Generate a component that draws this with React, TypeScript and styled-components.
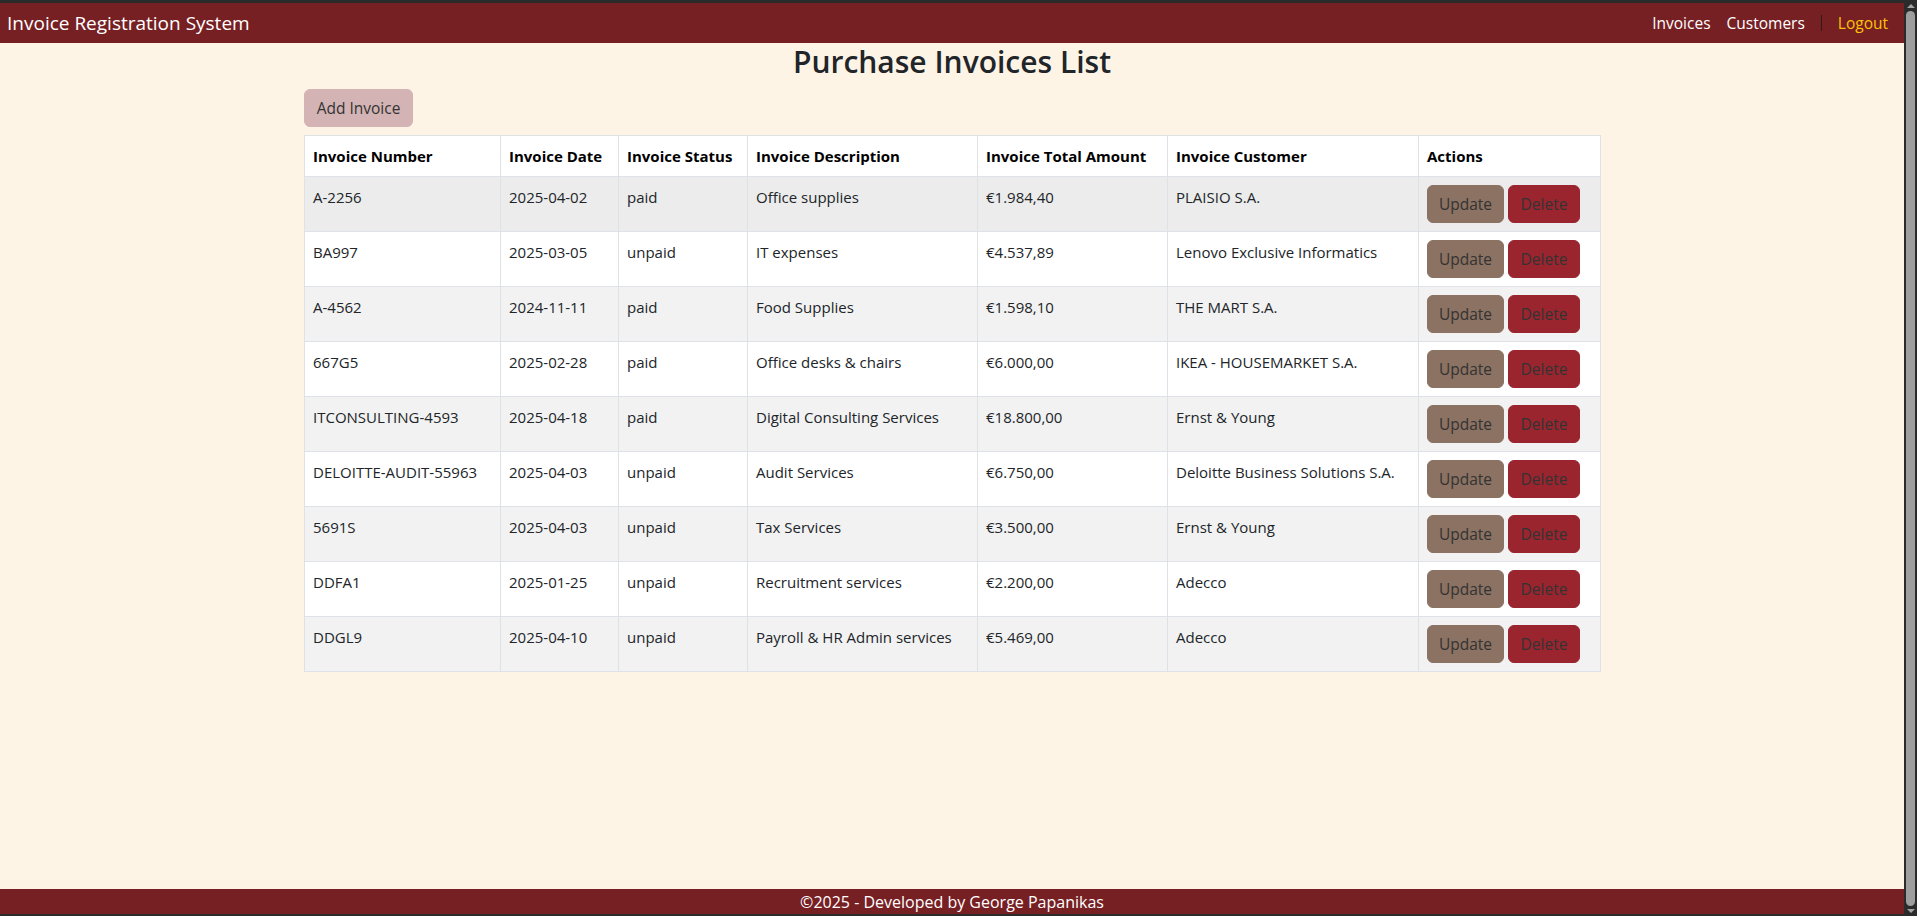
import React from "react";
import styled, { createGlobalStyle } from "styled-components";

const Global = createGlobalStyle`
  html, body { margin: 0; padding: 0; height: 100%; overflow: hidden; }
  body { font-family: "Segoe UI", "Open Sans", "Noto Sans", sans-serif; }
  * { box-sizing: border-box; }
`;

const Frame = styled.div`
  height: 100vh;
  display: flex;
  background: #2b2b2b;
`;

const Page = styled.div`
  flex: 1;
  display: flex;
  flex-direction: column;
  padding: 3px 0 2px;
`;

const Scrollbar = styled.div`
  width: 13px;
  display: flex;
  flex-direction: column;
  align-items: center;
  padding: 4px 0 3px;
  gap: 3px;
`;

const Arrow = styled.div<{ $down?: boolean }>`
  width: 0;
  height: 0;
  border-left: 4px solid transparent;
  border-right: 4px solid transparent;
  ${(p) => (p.$down ? "border-top: 4px solid #a3a3a3;" : "border-bottom: 4px solid #a3a3a3;")}
`;

const Thumb = styled.div`
  flex: 1;
  width: 9px;
  border-radius: 5px;
  background: #9e9e9e;
`;

const NavBar = styled.nav`
  height: 40px;
  background: #762024;
  display: flex;
  align-items: center;
  justify-content: space-between;
  padding: 0 16px 0 7px;
  color: #fff;
`;

const Brand = styled.div`
  font-size: 19px;
  color: #fff;
`;

const NavLinks = styled.div`
  display: flex;
  align-items: center;
`;

const NavLink = styled.a<{ $gold?: boolean }>`
  font-size: 15.5px;
  color: ${(p) => (p.$gold ? "#ffc107" : "#fff")};
  text-decoration: none;
  padding: 0 8px;
  &:last-child { padding-right: 0; }
`;

const Separator = styled.span`
  width: 1px;
  height: 16px;
  background: #2f1a1a;
  margin: 0 8px;
`;

const Main = styled.main`
  flex: 1;
  background: #fef4e6;
  display: flex;
  flex-direction: column;
  align-items: center;
`;

const Container = styled.div`
  width: 1320px;
  padding: 0 12px;
  display: flex;
  flex-direction: column;
  align-items: flex-start;
`;

const Title = styled.h2`
  margin: 0 0 8px;
  align-self: stretch;
  text-align: center;
  font-size: 30px;
  font-weight: 600;
  line-height: 38px;
  color: #212529;
`;

const Button = styled.button<{ $bg: string }>`
  font-family: inherit;
  font-size: 15.5px;
  line-height: 24px;
  border: 1px solid ${(p) => p.$bg};
  border-radius: 6px;
  background: ${(p) => p.$bg};
  color: #333;
  cursor: pointer;
  height: 38px;
  padding: 0;
`;

const AddButton = styled(Button)`
  width: 109px;
  margin-bottom: 8px;
`;

const ActionButton = styled(Button)<{ $w: number }>`
  width: ${(p) => p.$w}px;
`;

const Table = styled.table`
  width: 1296px;
  border-collapse: collapse;
  table-layout: fixed;
  font-size: 15px;
  color: #212529;
`;

const Th = styled.th<{ $w: number }>`
  width: ${(p) => p.$w}px;
  text-align: left;
  font-weight: 700;
  color: #000;
  padding: 8px;
  line-height: 24px;
  background: #fff;
  border: 1px solid #dee2e6;
`;

const Row = styled.tr<{ $shade: string }>`
  background: ${(p) => p.$shade};
`;

const Td = styled.td`
  padding: 8px;
  line-height: 24px;
  vertical-align: top;
  border: 1px solid #dee2e6;
`;

const Actions = styled.div`
  display: flex;
  gap: 4px;
`;

const Footer = styled.footer`
  height: 25px;
  background: #762024;
  color: #fff;
  font-size: 16px;
  display: flex;
  align-items: center;
  justify-content: center;
`;

const columns: [string, number][] = [
  ["Invoice Number", 196],
  ["Invoice Date", 118],
  ["Invoice Status", 129],
  ["Invoice Description", 230],
  ["Invoice Total Amount", 190],
  ["Invoice Customer", 251],
  ["Actions", 182],
];

const rows = [
  ["A-2256", "2025-04-02", "paid", "Office supplies", "€1.984,40", "PLAISIO S.A."],
  ["BA997", "2025-03-05", "unpaid", "IT expenses", "€4.537,89", "Lenovo Exclusive Informatics"],
  ["A-4562", "2024-11-11", "paid", "Food Supplies", "€1.598,10", "THE MART S.A."],
  ["667G5", "2025-02-28", "paid", "Office desks & chairs", "€6.000,00", "IKEA - HOUSEMARKET S.A."],
  ["ITCONSULTING-4593", "2025-04-18", "paid", "Digital Consulting Services", "€18.800,00", "Ernst & Young"],
  ["DELOITTE-AUDIT-55963", "2025-04-03", "unpaid", "Audit Services", "€6.750,00", "Deloitte Business Solutions S.A."],
  ["5691S", "2025-04-03", "unpaid", "Tax Services", "€3.500,00", "Ernst & Young"],
  ["DDFA1", "2025-01-25", "unpaid", "Recruitment services", "€2.200,00", "Adecco"],
  ["DDGL9", "2025-04-10", "unpaid", "Payroll & HR Admin services", "€5.469,00", "Adecco"],
];

export default function App() {
  return (
    <>
      <Global />
      <Frame>
        <Page>
          <NavBar>
            <Brand>Invoice Registration System</Brand>
            <NavLinks>
              <NavLink href="#">Invoices</NavLink>
              <NavLink href="#">Customers</NavLink>
              <Separator />
              <NavLink href="#" $gold>Logout</NavLink>
            </NavLinks>
          </NavBar>
          <Main>
            <Container>
              <Title>Purchase Invoices List</Title>
              <AddButton $bg="#d3b3b3">Add Invoice</AddButton>
              <Table>
                <thead>
                  <tr>
                    {columns.map(([c, w]) => (
                      <Th key={c} $w={w}>{c}</Th>
                    ))}
                  </tr>
                </thead>
                <tbody>
                  {rows.map((r, i) => (
                    <Row key={r[0]} $shade={i === 0 ? "#ececec" : i % 2 === 0 ? "#f2f2f2" : "#ffffff"}>
                      {r.map((c, j) => (
                        <Td key={j}>{c}</Td>
                      ))}
                      <Td>
                        <Actions>
                          <ActionButton $bg="#8b7262" $w={77}>Update</ActionButton>
                          <ActionButton $bg="#9b252f" $w={72}>Delete</ActionButton>
                        </Actions>
                      </Td>
                    </Row>
                  ))}
                </tbody>
              </Table>
            </Container>
          </Main>
          <Footer>©2025 - Developed by George Papanikas</Footer>
        </Page>
        <Scrollbar>
          <Arrow />
          <Thumb />
          <Arrow $down />
        </Scrollbar>
      </Frame>
    </>
  );
}
